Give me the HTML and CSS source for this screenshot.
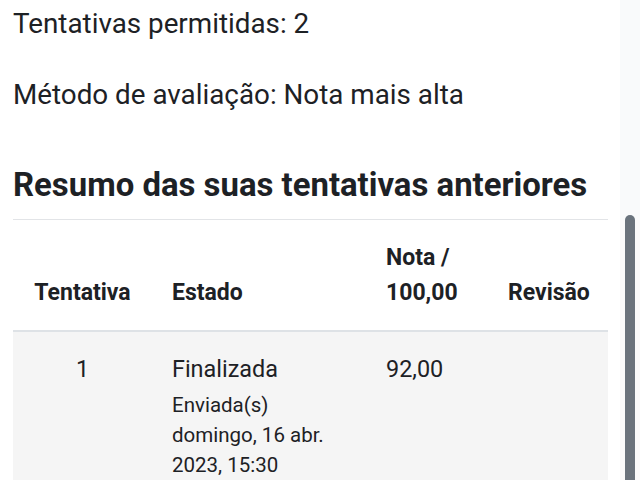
FILE: index.html
```html
<!DOCTYPE html>
<html lang="pt">
<head>
<meta charset="utf-8">
<link rel="stylesheet" href="styles.css">
</head>
<body>
<div class="page">
  <main class="main">
    <p class="info">Tentativas permitidas: 2</p>
    <p class="info">Método de avaliação: Nota mais alta</p>
    <h3 class="title">Resumo das suas tentativas anteriores</h3>
    <table class="summary">
      <colgroup>
        <col class="c1"><col class="c2"><col class="c3"><col class="c4">
      </colgroup>
      <thead>
        <tr>
          <th class="center">Tentativa</th>
          <th>Estado</th>
          <th>Nota /<br>100,00</th>
          <th>Revisão</th>
        </tr>
      </thead>
      <tbody>
        <tr>
          <td class="center">1</td>
          <td>Finalizada<span class="sub">Enviada(s) domingo, 16 abr. 2023, 15:30</span></td>
          <td>92,00</td>
          <td></td>
        </tr>
      </tbody>
    </table>
  </main>
  <aside class="scroll"><div class="thumb"></div></aside>
</div>
</body>
</html>
```

FILE: styles.css
```css
html, body {
  margin: 0;
  padding: 0;
  background: #fff;
  height: 100%;
  overflow: hidden;
}
body {
  font-family: Roboto, "Noto Sans", sans-serif;
  color: #1d2125;
  font-size: 23.4px;
  line-height: 35px;
}
.page {
  display: flex;
  height: 480px;
}
.main {
  width: 595px;
  padding: 3px 12px 0 13px;
}
.info {
  margin: 0 0 29px 0;
  font-size: 27.8px;
  line-height: 42px;
}
.title {
  margin: 49px 0 14px;
  font-size: 32.9px;
  line-height: 40px;
  font-weight: 700;
}
.summary {
  width: 595px;
  table-layout: fixed;
  border-collapse: collapse;
}
.c1 { width: 139px; }
.c2 { width: 214px; }
.c3 { width: 122px; }
.c4 { width: 120px; }
.summary th, .summary td {
  padding: 20px;
  text-align: left;
  vertical-align: top;
  border-top: 1px solid #e2e4e7;
}
.summary th {
  font-weight: 700;
  font-size: 23px;
  vertical-align: bottom;
  border-bottom: 2px solid #dee2e6;
}
.summary tbody tr {
  background: #f5f5f5;
}
.summary td {
  border-top: none;
  padding-bottom: 40px;
}
.summary .center {
  text-align: center;
}
.sub {
  display: block;
  padding-top: 3px;
  font-size: 20.5px;
  line-height: 30px;
}
.scroll {
  width: 20px;
  background: #f9fafb;
  padding-top: 215px;
  box-sizing: border-box;
}
.thumb {
  width: 10px;
  margin-left: 5px;
  height: 300px;
  background: #6a737d;
  border-radius: 5px 5px 0 0;
}
```
